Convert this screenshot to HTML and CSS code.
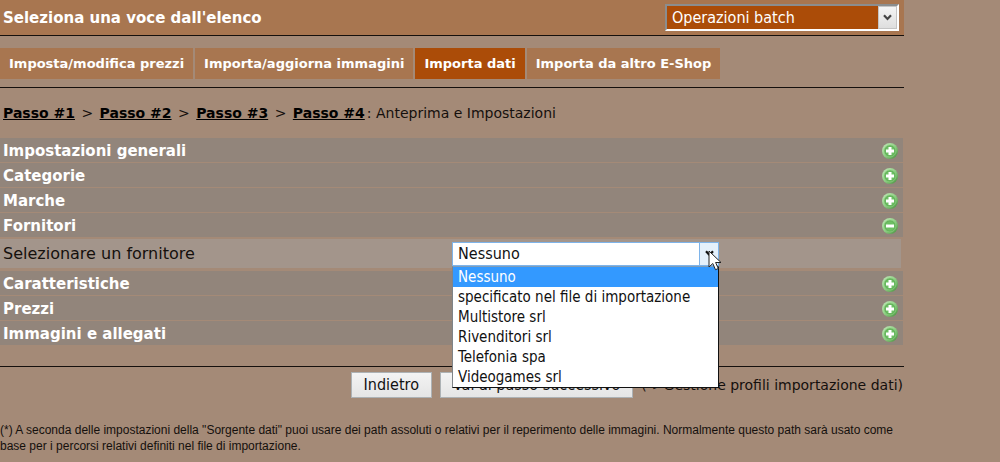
FILE: index.html
```html
<!DOCTYPE html>
<html lang="it">
<head>
<meta charset="utf-8">
<title>Operazioni batch - Importa dati</title>
<link rel="stylesheet" href="styles.css">
</head>
<body>
<svg class="sprites" aria-hidden="true">
  <defs>
    <radialGradient id="ball" cx="50%" cy="50%" r="50%">
      <stop offset="0" stop-color="#5db558"/>
      <stop offset="0.6" stop-color="#6fc065"/>
      <stop offset="1" stop-color="#5fae56"/>
    </radialGradient>
    <linearGradient id="shine" x1="0" y1="0" x2="1" y2="1">
      <stop offset="0" stop-color="#c4e8bb"/>
      <stop offset="0.5" stop-color="#8fd085"/>
      <stop offset="1" stop-color="#3f8a35"/>
    </linearGradient>
    <symbol id="disc" viewBox="0 0 16 16">
      <circle cx="8" cy="8" r="8" fill="url(#shine)"/>
      <circle cx="8" cy="8" r="6" fill="url(#ball)" stroke="#95d48a" stroke-width="0.6"/>
    </symbol>
    <symbol id="plus" viewBox="0 0 16 16">
      <use href="#disc"/>
      <path d="M6.500 4h3v2.500h2.500v3H9.500v2.500H6.500V9.500H4V6.500h2.500z" fill="#fff"/>
    </symbol>
    <symbol id="minus" viewBox="0 0 16 16">
      <use href="#disc"/>
      <rect x="4" y="6.500" width="8" height="3" fill="#fff"/>
    </symbol>
    <symbol id="chevron" viewBox="0 0 9 7">
      <path d="M1 1.200 4.500 5 8 1.200" fill="none" stroke="currentColor" stroke-width="2.200"/>
    </symbol>
  </defs>
</svg>
<main class="page">
  <header class="header">
    <label class="header-title" for="operation">Seleziona una voce dall'elenco</label>
    <span class="picker picker-operation">
      <select id="operation"><option>Operazioni batch</option></select>
      <span class="picker-arrow"><svg width="9" height="7"><use href="#chevron"/></svg></span>
    </span>
  </header>
  <nav class="tabs">
    <a class="tab" href="#">Imposta/modifica prezzi</a>
    <a class="tab" href="#">Importa/aggiorna immagini</a>
    <a class="tab tab-active" href="#">Importa dati</a>
    <a class="tab" href="#">Importa da altro E-Shop</a>
  </nav>
  <p class="steps"><a href="#">Passo #1</a> &gt; <a href="#">Passo #2</a> &gt; <a href="#">Passo #3</a> &gt; <a href="#">Passo #4</a>: Anteprima e Impostazioni</p>
  <div class="sections">
    <button class="section">Impostazioni generali<svg class="toggle"><use href="#plus"/></svg></button>
    <button class="section">Categorie<svg class="toggle"><use href="#plus"/></svg></button>
    <button class="section">Marche<svg class="toggle"><use href="#plus"/></svg></button>
    <button class="section">Fornitori<svg class="toggle"><use href="#minus"/></svg></button>
    <div class="panel">
      <label for="supplier">Selezionare un fornitore</label>
      <div class="panel-field">
        <span class="picker picker-supplier">
          <select id="supplier"><option>Nessuno</option></select>
          <span class="picker-arrow"><svg width="9" height="7"><use href="#chevron"/></svg></span>
          <span class="options" role="listbox" aria-label="Fornitori">
            <span class="option option-selected" role="option">Nessuno</span>
            <span class="option" role="option">specificato nel file di importazione</span>
            <span class="option" role="option">Multistore srl</span>
            <span class="option" role="option">Rivenditori srl</span>
            <span class="option" role="option">Telefonia spa</span>
            <span class="option" role="option">Videogames srl</span>
          </span>
          <svg class="pointer" viewBox="0 0 14 21"><path d="M1 1v16l3.800-3.500 2.700 6.200 2.800-1.200-2.700-6h5.400z" fill="#fff" stroke="#222" stroke-width="1"/></svg>
        </span>
      </div>
    </div>
    <button class="section">Caratteristiche<svg class="toggle"><use href="#plus"/></svg></button>
    <button class="section">Prezzi<svg class="toggle"><use href="#plus"/></svg></button>
    <button class="section">Immagini e allegati<svg class="toggle"><use href="#plus"/></svg></button>
  </div>
  <div class="actions">
    <button class="action">Indietro</button>
    <button class="action">Vai al passo successivo</button>
    <a class="profiles" href="#">(-&gt;Gestione profili importazione dati)</a>
  </div>
  <p class="note">(*) A seconda delle impostazioni della "Sorgente dati" puoi usare dei path assoluti o relativi per il reperimento delle immagini. Normalmente questo path sarà usato come base per i percorsi relativi definiti nel file di importazione.</p>
</main>
</body>
</html>
```

FILE: styles.css
```css
* { box-sizing: border-box; }
body {
  margin: 0;
  background: #a48a77;
  color: #15100d;
  font: 14px/18px "DejaVu Sans", Verdana, sans-serif;
}
button, select { font: inherit; color: inherit; margin: 0; }
.sprites { position: absolute; width: 0; height: 0; }
.page { margin-right: 96px; }

.header {
  display: flex;
  align-items: center;
  justify-content: space-between;
  height: 36px;
  padding: 0 5px 0 3px;
  background: #a87650;
  border-bottom: 1px solid #15100d;
}
.header-title { color: #fff; font-size: 15px; font-weight: bold; }

.picker {
  position: relative;
  display: flex;
  font-family: "DejaVu Sans Condensed", "DejaVu Sans", Tahoma, sans-serif;
  font-stretch: condensed;
  font-size: 16px;
}
.picker select {
  flex: 1;
  width: 100%;
  appearance: none;
  border: 0;
  border-radius: 0;
  background: transparent;
  padding: 1px 20px 0 5px;
}
.picker-arrow {
  position: absolute;
  top: 0;
  right: 0;
  bottom: 0;
  width: 19px;
  display: flex;
  align-items: center;
  justify-content: center;
  pointer-events: none;
}
.picker-operation {
  width: 234px;
  height: 27px;
  border: 2px solid;
  border-color: #8b8d8e #fff #fff #8b8d8e;
  background: #ab4c08;
  color: #fff;
}
.picker-operation .picker-arrow {
  background: linear-gradient(#f4f4f4, #dedede);
  border: 1px solid #c4c4c4;
  color: #444;
}

.tabs {
  display: flex;
  gap: 2px;
  padding: 12px 0 8px;
  border-bottom: 1px solid #15100d;
}
.tab {
  padding: 7px 9px 6px;
  background: #a87650;
  color: #fff;
  font-size: 13px;
  font-weight: bold;
  text-decoration: none;
}
.tab-active { background: #ab4c08; }

.steps { margin: 16px 0; padding-left: 1px; }
.steps a { margin: 0 2px; color: #000; font-weight: bold; }

.sections {
  display: flex;
  flex-direction: column;
  gap: 1px;
  padding-bottom: 21px;
  border-bottom: 1px solid #15100d;
}
.section {
  display: flex;
  align-items: center;
  justify-content: space-between;
  height: 24px;
  margin-right: 1px;
  padding: 1px 5px 0 3px;
  border: 0;
  background: #92857b;
  color: #fff;
  font-size: 15px;
  font-weight: bold;
}
.toggle { width: 16px; height: 16px; }
.panel {
  display: grid;
  grid-template-columns: 1fr 1fr;
  align-items: center;
  height: 29px;
  margin: 1px 3px 2px 0;
  padding-left: 3px;
  background: #a3958b;
  font-size: 16px;
}
.panel-field { display: flex; }
.picker-supplier {
  width: 267px;
  height: 24px;
  border: 1px solid #7eb4ea;
  background: #fff;
  color: #111;
}
.picker-supplier .picker-arrow {
  background: #e5f1fc;
  border-left: 1px solid #7eb4ea;
}
.options {
  position: absolute;
  z-index: 1;
  top: 23px;
  left: -1px;
  right: -1px;
  border: 1px solid #111;
  border-top-color: #7f9db9;
  border-left-color: #7f8488;
  background: #fff;
  font-size: 15px;
}
.option { display: block; padding: 0 5px; line-height: 20px; white-space: nowrap; }
.option-selected { background: #3399ff; color: #fff; }
.pointer {
  position: absolute;
  z-index: 2;
  top: 7px;
  right: -4px;
  width: 14px;
  height: 21px;
}

.actions {
  display: flex;
  align-items: center;
  justify-content: flex-end;
  gap: 8px;
  padding: 5px 1px 0 0;
}
.action {
  height: 26px;
  padding: 0 12px;
  border: 1px solid #adb2b5;
  background: linear-gradient(#f3f3f3, #e5e5e5);
  color: #111;
  font-family: "DejaVu Sans Condensed", "DejaVu Sans", Tahoma, sans-serif;
  font-stretch: condensed;
  font-size: 16px;
}
.profiles { color: inherit; text-decoration: none; }
.note { margin: 24px 5px 0 0; font: 12px/16px "Liberation Sans", Arial, sans-serif; }
```
